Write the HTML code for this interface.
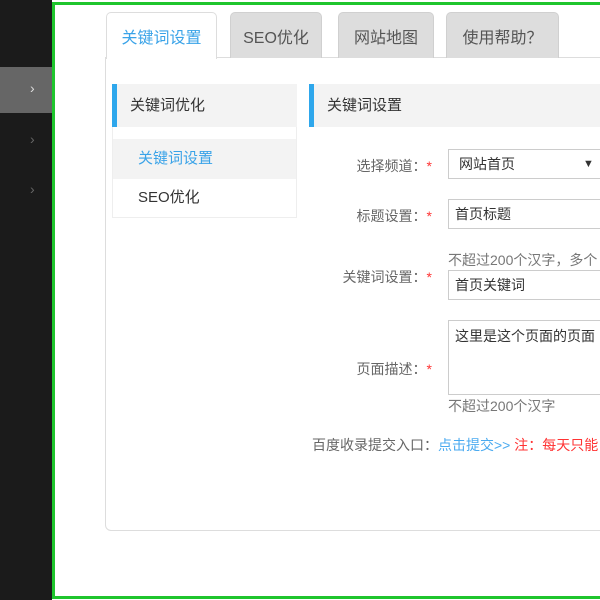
<!DOCTYPE html>
<html><head><meta charset="utf-8"><style>
*{margin:0;padding:0;box-sizing:border-box}
body{width:600px;height:600px;overflow:hidden;background:#fff;position:relative;font-family:"Liberation Sans","Noto Sans CJK SC",sans-serif;font-size:14px;color:#333}
.a{position:absolute}
.side{left:0;top:0;width:52px;height:600px;background:#1b1b1b}
.chev{color:#666;font-size:14px;left:30px}
.tab{top:12px;height:46px;background:#ddd;border:1px solid #d0d0d0;border-bottom:none;border-radius:5px 5px 0 0;font-size:16px;color:#555;text-align:center;line-height:52px}
.lbl{width:120px;text-align:right;left:312px;color:#666}
.lbl b{color:#f33;font-weight:normal}
.inp{left:448px;width:160px;border:1px solid #ccc;padding-left:6px;color:#333;background:#fff}
.hint{left:448px;color:#777}
</style></head><body>
<div class="a side"></div>
<div class="a" style="left:52px;top:2px;width:548px;height:597px;border:3px solid #1fc52d;border-right:none;"></div>
<div class="a" style="left:0;top:67px;width:52px;height:46px;background:#666"></div>
<div class="a chev" style="top:80px;color:#ddd">›</div>
<div class="a chev" style="top:131px">›</div>
<div class="a chev" style="top:181px">›</div>
<div class="a" style="left:105px;top:57px;width:500px;height:474px;border:1px solid #ddd;border-radius:0 0 0 6px"></div>
<div class="a tab" style="left:106px;width:111px;height:47px;background:#fff;border-color:#ddd;color:#3aa3e8">关键词设置</div>
<div class="a tab" style="left:230px;width:92px">SEO优化</div>
<div class="a tab" style="left:338px;width:96px">网站地图</div>
<div class="a tab" style="left:446px;width:113px">使用帮助？</div>
<div class="a" style="left:112px;top:84px;width:185px;height:134px;border:1px solid #eee"></div>
<div class="a" style="left:112px;top:84px;width:185px;height:43px;background:#f3f3f3;border-left:5px solid #2ea7ec;padding-left:13px;line-height:43px;font-size:15px">关键词优化</div>
<div class="a" style="left:113px;top:139px;width:183px;height:40px;background:#f3f3f3;color:#3aa3e8;padding-left:25px;line-height:40px;font-size:15px">关键词设置</div>
<div class="a" style="left:113px;top:179px;width:183px;height:38px;padding-left:25px;line-height:38px;font-size:15px">SEO优化</div>
<div class="a" style="left:309px;top:84px;width:300px;height:43px;background:#f3f3f3;border-left:5px solid #2ea7ec;padding-left:13px;line-height:43px;font-size:15px">关键词设置</div>
<div class="a lbl" style="top:156px">选择频道：<b>*</b></div>
<div class="a inp" style="top:149px;height:30px;line-height:28px;padding-left:10px">网站首页<span style="position:absolute;left:134px;font-size:11px">▼</span></div>
<div class="a lbl" style="top:206px">标题设置：<b>*</b></div>
<div class="a inp" style="top:199px;height:30px;line-height:28px">首页标题</div>
<div class="a hint" style="top:250px">不超过200个汉字，多个</div>
<div class="a lbl" style="top:267px">关键词设置：<b>*</b></div>
<div class="a inp" style="top:270px;height:30px;line-height:28px">首页关键词</div>
<div class="a lbl" style="top:359px">页面描述：<b>*</b></div>
<div class="a inp" style="top:320px;height:75px;line-height:30px">这里是这个页面的页面</div>
<div class="a hint" style="top:396px">不超过200个汉字</div>
<div class="a" style="left:312px;top:435px;color:#666;white-space:nowrap">百度收录提交入口：<span style="color:#4aaaf0">点击提交&gt;&gt;</span> <span style="color:#f33">注：每天只能</span></div>
</body></html>
